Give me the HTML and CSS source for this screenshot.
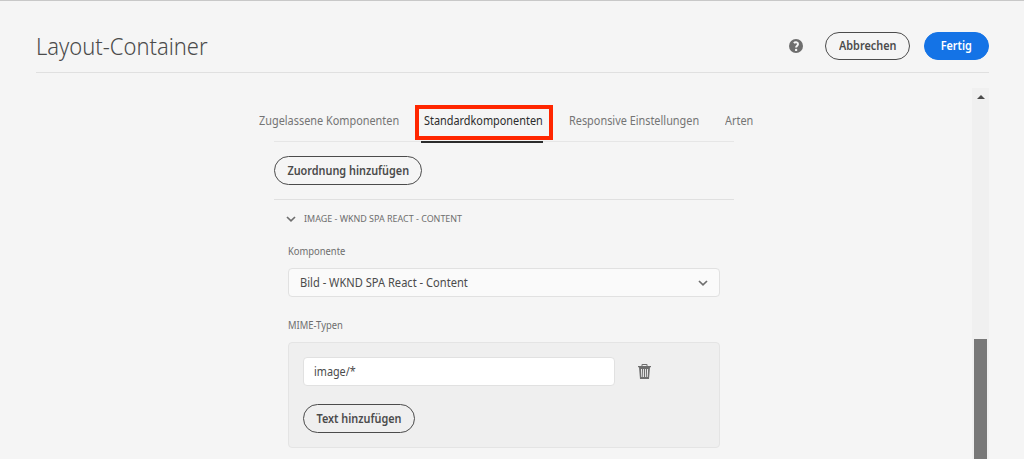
FILE: index.html
```html
<!DOCTYPE html>
<html lang="de">
<head>
<meta charset="utf-8">
<title>Layout-Container</title>
<link rel="stylesheet" href="styles.css">
</head>
<body>
<div class="dialog">
  <header class="header">
    <h1 class="title">Layout-Container</h1>
    <svg class="help" viewBox="0 0 14 14"><circle cx="7" cy="7" r="7"/><path d="M4.9 4.1C6 2.900 9 3 9 5.100 9 6.700 7.100 6.700 7.100 8.600" fill="none" stroke="#f5f5f5" stroke-width="2"/><circle class="dot" cx="7.100" cy="10.900" r="1.200"/></svg>
    <button class="btn cancel"><span>Abbrechen</span></button>
    <button class="btn primary"><span>Fertig</span></button>
  </header>
  <main class="body">
    <section class="content">
      <nav class="tabs">
        <a class="tab allowed"><span>Zugelassene Komponenten</span></a>
        <a class="tab standard"><span>Standardkomponenten</span><i class="highlight"></i></a>
        <a class="tab responsive"><span>Responsive Einstellungen</span></a>
        <a class="tab styles"><span>Arten</span></a>
      </nav>
      <div class="action"><button class="btn add-mapping"><span>Zuordnung hinzufügen</span></button></div>
      <div class="group">
        <div class="group-head">
          <svg class="chev small" viewBox="0 0 10 6"><path d="M1 1l4 3.800L9 1"/></svg>
          <span class="group-title">IMAGE - WKND SPA REACT - CONTENT</span>
        </div>
        <label class="label comp"><span>Komponente</span></label>
        <div class="select"><span class="select-text">Bild - WKND SPA React - Content</span><svg class="chev" viewBox="0 0 10 6"><path d="M1 1l4 3.800L9 1"/></svg></div>
        <label class="label mime"><span>MIME-Typen</span></label>
        <div class="panel">
          <div class="row">
            <div class="input"><span class="input-text">image/*</span></div>
            <svg class="trash" viewBox="0 0 13 16"><path fill-rule="evenodd" d="M0 2h3.500V1Q3.500 0 4.500 0h4q1 0 1 1v1H13v1.300h-1L11 15H2L1 3.300H0zM4.500 1v1h4V1zM3 5l.4 8h.9L4 5zM5.100 5v8h.9V5zM7.100 5v8H8V5zM9.100 5l-.3 8h.9l.4-8z"/></svg>
          </div>
          <button class="btn add-text"><span>Text hinzufügen</span></button>
        </div>
      </div>
    </section>
    <div class="scrollbar"><i class="arrow"></i><i class="thumb"></i></div>
  </main>
</div>
</body>
</html>
```
FILE: styles.css
```css
* { box-sizing: border-box; }
body { margin: 0; background: #f5f5f5; color: #4b4b4b; font: 12px/16px "Noto Sans", sans-serif; overflow: hidden; }
.dialog { height: 459px; padding: 0 35px 0 36px; border-top: 1px solid #c8c8c8; display: flex; flex-direction: column; }
.header { height: 72px; flex: none; display: flex; align-items: center; padding-top: 19px; border-bottom: 1px solid #e0e0e0; }
.title { margin: 0 auto 0 0; font-size: 23px; line-height: 30px; font-weight: 300; white-space: nowrap; transform: scaleX(.953); transform-origin: 0 50%; }
.help { width: 14px; height: 14px; margin-right: 22px; fill: #6e6e6e; }
.help .dot { fill: #f5f5f5; }
.btn { font: 600 12px/16px "Noto Sans", sans-serif; color: #4b4b4b; background: transparent; border: 1px solid #4b4b4b; border-radius: 15px; padding: 0; height: 29px; white-space: nowrap; display: flex; align-items: center; justify-content: center; }
.btn span { flex: none; transform: scaleX(.905); }
.cancel { width: 85px; height: 28px; margin-right: 14px; }
.primary { width: 65px; height: 28px; background: #1473e6; border-color: #1473e6; color: #fff; }
.body { flex: 1; display: flex; justify-content: space-between; min-height: 0; padding-left: 238px; }
.content { width: 460px; padding-top: 32px; }
.tabs { height: 37px; display: flex; border-bottom: 1px solid #e6e6e6; }
.tab { flex: none; height: 38px; line-height: 32px; color: #747474; white-space: nowrap; font-size: 12px; }
.tab span { display: inline-block; transform: scaleX(.907); transform-origin: 0 50%; }
.allowed { margin-left: -15px; width: 162px; }
.standard { position: relative; width: 122px; margin-right: 26px; padding-left: 3px; color: #2c2c2c; border-bottom: 2px solid #2c2c2c; }
.highlight { position: absolute; left: -6px; top: 0; width: 138px; height: 35px; border: 4px solid #ff2600; }
.responsive { width: 156px; }
.action { padding: 14px 0; height: 57px; }
.add-mapping { width: 148px; }
.group { border-top: 1px solid #e0e0e0; padding-left: 14px; width: 460px; }
.group-head { height: 37px; display: flex; align-items: center; gap: 8px; padding-left: 0; margin-left: -2px; }
.group-title { font-size: 9.5px; color: #6e6e6e; white-space: nowrap; transform: scaleX(.94); transform-origin: 0 50%; }
.chev { width: 10px; height: 6px; fill: none; stroke: #6e6e6e; stroke-width: 1.7; flex: none; }
.label { display: block; font-size: 10px; color: #6e6e6e; line-height: 14px; }
.label span { display: inline-block; transform: scaleX(.94); transform-origin: 0 50%; }
.comp { height: 31px; padding-top: 7px; }
.select { width: 432px; height: 29px; border: 1px solid #e1e1e1; border-radius: 4px; background: #fafafa; display: flex; align-items: center; justify-content: space-between; padding: 0 11px; }
.select-text { transform: scaleX(.925); transform-origin: 0 50%; }
.mime { height: 45px; padding-top: 21px; }
.panel { width: 432px; height: 106px; border: 1px solid #e4e4e4; border-radius: 4px; background: #efefef; padding: 14px; }
.row { display: flex; align-items: center; gap: 23px; margin-bottom: 18px; }
.input { width: 312px; height: 29px; border: 1px solid #e1e1e1; border-radius: 4px; background: #fff; padding: 0 10px; display: flex; align-items: center; }
.input-text { transform: scaleX(.9); transform-origin: 0 50%; }
.trash { width: 13px; height: 16px; fill: #6e6e6e; }
.add-text { width: 112px; }
.scrollbar { width: 17px; margin-top: 15px; background: #f0f0f0; display: flex; flex-direction: column; justify-content: space-between; align-items: center; padding-top: 7px; }
.arrow { border: 4px solid transparent; border-top: 0; border-bottom-color: #4b4b4b; }
.thumb { width: 13px; height: 120px; background: #787878; }
```
